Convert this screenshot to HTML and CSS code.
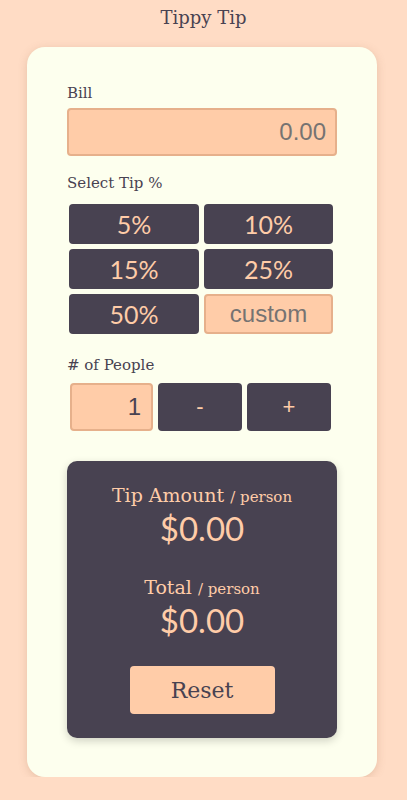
FILE: index.html
```html
<!DOCTYPE html>
<html lang="en">
<head>
<meta charset="utf-8">
<title>Tippy Tip</title>
<link rel="stylesheet" href="styles.css">
</head>
<body>
  <h1 class="title">Tippy Tip</h1>
  <main class="card">
    <label class="label" for="bill">Bill</label>
    <input class="field bill" id="bill" type="text" placeholder="0.00">

    <div class="label tip-label">Select Tip %</div>
    <div class="tips">
      <button class="tip">5%</button>
      <button class="tip">10%</button>
      <button class="tip">15%</button>
      <button class="tip">25%</button>
      <button class="tip">50%</button>
      <input class="field custom" type="text" placeholder="custom">
    </div>

    <div class="label people-label"># of People</div>
    <div class="people">
      <input class="field count" type="text" value="1">
      <button class="step">-</button>
      <button class="step">+</button>
    </div>

    <section class="result">
      <div class="res-label">Tip Amount <span class="per">/ person</span></div>
      <div class="res-value">$0.00</div>
      <div class="res-label second">Total <span class="per">/ person</span></div>
      <div class="res-value">$0.00</div>
      <button class="reset">Reset</button>
    </section>
  </main>
</body>
</html>
```
FILE: styles.css
```css
* { box-sizing: border-box; }

body {
  margin: 0;
  background: #ffdcc5;
  color: #484251;
  font-family: "DejaVu Serif", serif;
}

.title {
  margin: 0;
  padding: 7px 0 18px;
  font-size: 18px;
  line-height: 22px;
  font-weight: normal;
  text-align: center;
  color: #484251;
}

.card {
  margin: 0 30px 0 27px;
  width: 350px;
  background: #fdffee;
  border-radius: 18px;
  padding: 37px 40px 39px;
  box-shadow: 0 2px 8px rgba(160, 110, 80, 0.25);
  display: flex;
  flex-direction: column;
}

.label {
  display: block;
  font-size: 15px;
  line-height: 18px;
  color: #484251;
}

.field {
  background: #ffcca8;
  border: 2px solid #e6b08b;
  border-radius: 4px;
  font-family: "Liberation Sans", Arial, sans-serif;
  font-size: 24px;
  color: #484251;
  outline: none;
  text-align: right;
}
.field::placeholder { color: #767372; }

.bill {
  margin-top: 6px;
  height: 48px;
  width: 270px;
  padding: 0 9px;
}

.tip-label { margin-top: 18px; }

.tips {
  margin: 12px 0 0 2px;
  width: 264px;
  display: grid;
  grid-template-columns: 130px 129px;
  grid-auto-rows: 40px;
  gap: 5px;
}

.tip, .step {
  border: none;
  border-radius: 4px;
  background: #484251;
  color: #ffcca8;
  font-family: Lato, sans-serif;
  font-size: 25px;
  padding: 0;
  cursor: pointer;
}

.custom {
  height: 40px;
  text-align: center;
  padding: 0;
}

.people-label { margin-top: 22px; }

.people {
  margin: 9px 0 0 3px;
  display: flex;
  gap: 5px;
  height: 48px;
}

.count {
  width: 83px;
  padding: 0 10px;
}

.step {
  width: 84px;
  font-family: "Liberation Sans", Arial, sans-serif;
  font-size: 22px;
}

.result {
  margin-top: 30px;
  width: 270px;
  background: #484251;
  border-radius: 10px;
  padding: 23px 0 24px;
  box-shadow: 0 3px 8px rgba(0, 0, 0, 0.18);
  display: flex;
  flex-direction: column;
  align-items: center;
  color: #ffcca8;
}

.res-label {
  font-size: 19px;
  line-height: 22px;
}
.res-label.second { margin-top: 28px; }

.per { font-size: 15px; line-height: 1; }

.res-value {
  margin-top: 2px;
  font-family: Lato, sans-serif;
  font-size: 33px;
  line-height: 40px;
}

.reset {
  margin-top: 26px;
  width: 145px;
  height: 48px;
  border: none;
  border-radius: 4px;
  background: #ffcca8;
  color: #484251;
  font-family: "DejaVu Serif", serif;
  font-size: 22px;
  cursor: pointer;
}
```
